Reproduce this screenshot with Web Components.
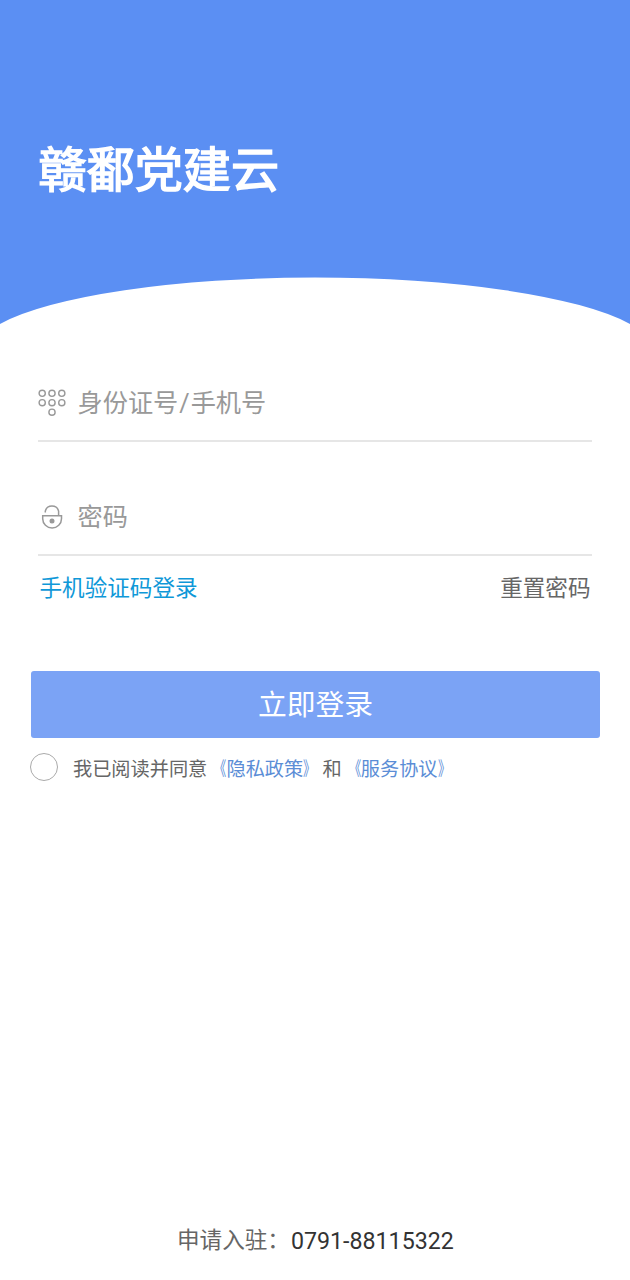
<!DOCTYPE html>
<html lang="zh-CN">
<head>
<meta charset="utf-8">
<title>赣鄱党建云</title>
<style>
html,body{margin:0;height:100%;background:#fff}
body{font-family:Roboto,"Noto Sans CJK SC",sans-serif}
</style>
</head>
<body>
<login-page></login-page>
<script>
const define = (name, html) => customElements.define(name, class extends HTMLElement {
  constructor() {
    super();
    const t = document.createElement('template');
    t.innerHTML = html;
    this.attachShadow({mode: 'open'}).append(t.content.cloneNode(true));
  }
});

define('hero-banner', `
<style>
:host{display:grid;height:325px;color:#fff}
svg,h1{grid-area:1/1}
svg{display:block}
h1{margin:131px 0 0 38.5px;font-size:48.1px;line-height:70px;height:70px;font-weight:400;-webkit-text-stroke:1.6px #fff;font-family:"Noto Sans CJK SC",sans-serif;z-index:1}
</style>
<svg width="630" height="325" viewBox="0 0 630 325"><path fill="#5b8ff3" d="M0 0H630V324A339 73.6 0 0 0 0 324Z"/></svg>
<h1><slot></slot></h1>`);

define('icon-keypad', `
<style>:host{display:block;width:28px;height:28px}svg{display:block}</style>
<svg width="28" height="28" viewBox="0 0 28 28" fill="none" stroke="#999" stroke-width="1.4">
<circle cx="4.2" cy="4.3" r="3.1"/><circle cx="14" cy="4.3" r="3.1"/><circle cx="23.8" cy="4.3" r="3.1"/>
<circle cx="4.2" cy="13.7" r="3.1"/><circle cx="14" cy="13.7" r="3.1"/><circle cx="23.8" cy="13.7" r="3.1"/>
<circle cx="14" cy="23.2" r="3.1"/></svg>`);

define('icon-lock', `
<style>:host{display:block;width:28px;height:28px}svg{display:block}</style>
<svg width="28" height="28" viewBox="0 0 28 28" fill="none" stroke="#999" stroke-width="1.5">
<path d="M7.3 9.4V8.2A6.8 6.6 0 0 1 20.6 8.2V12.5M4.7 12.8H23.5V15.7A9.4 9.3 0 0 1 4.7 15.7Z"/>
<circle cx="14" cy="18" r="2.5" fill="#999" stroke="none"/></svg>`);

define('form-field', `
<style>
:host{display:flex;align-items:center;height:77px;border-bottom:2px solid #e6e6e6;box-sizing:border-box;color:#999;font-size:25.2px;line-height:37px}
span{margin:1px 0 0 11.5px}
::slotted(b){font-weight:400;margin:0 1px}
</style>
<slot name="icon"></slot><span><slot></slot></span>`);

define('link-row', `
<style>
:host{display:flex;justify-content:space-between;margin:0 39.5px 0 39.5px;padding-top:16px;font-size:22.6px;line-height:34px;color:#666}
::slotted(:first-child){color:#0f98d8}
</style><slot></slot>`);

define('submit-button', `
<style>
:host{display:block;margin:65px 30px 0 31px}
button{display:block;width:100%;height:67px;padding:1px 0 0;border:0;border-radius:3px;background:#7ba3f5;color:#fff;font:28.8px/66px Roboto,"Noto Sans CJK SC",sans-serif}
</style><button><slot></slot></button>`);

define('angle-mark', `
<style>
:host{display:inline-block;transform:scaleX(.65);transform-origin:right}
:host([close]){transform-origin:left}
</style><slot></slot>`);

define('agree-row', `
<style>
:host{display:flex;align-items:center;margin:13px 0 0 30px;height:32px;font-size:19.2px;line-height:32px;color:#666}
i{box-sizing:border-box;width:28px;height:28px;border:1.2px solid #aaa;border-radius:50%;margin-right:15px}
p{margin:6px 0 0;white-space:nowrap}
::slotted(a){color:#5b8dd6}
</style><i></i><p><slot></slot></p>`);

define('contact-line', `
<style>
:host{display:flex;margin:auto 0 22px 177px;font-size:22.6px;line-height:34px;color:#666;white-space:nowrap}
::slotted(b){font-weight:400;font-size:23.2px;color:#333;margin-left:1px}
</style><slot></slot>`);

define('login-page', `
<style>
:host{display:flex;flex-direction:column;width:630px;height:1280px;overflow:hidden}
.fields{margin:40px 38px 0;display:flex;flex-direction:column;gap:37px}
</style>
<hero-banner>赣鄱党建云</hero-banner>
<div class="fields">
<form-field><icon-keypad slot="icon"></icon-keypad>身份证号<b>/</b>手机号</form-field>
<form-field><icon-lock slot="icon"></icon-lock>密码</form-field>
</div>
<link-row><span>手机验证码登录</span><span>重置密码</span></link-row>
<submit-button>立即登录</submit-button>
<agree-row>我已阅读并同意<a><angle-mark>《</angle-mark>隐私政策<angle-mark close>》</angle-mark></a>和<a><angle-mark>《</angle-mark>服务协议<angle-mark close>》</angle-mark></a></agree-row>
<contact-line><span>申请入驻：</span><b>0791-88115322</b></contact-line>`);
</script>
</body>
</html>
